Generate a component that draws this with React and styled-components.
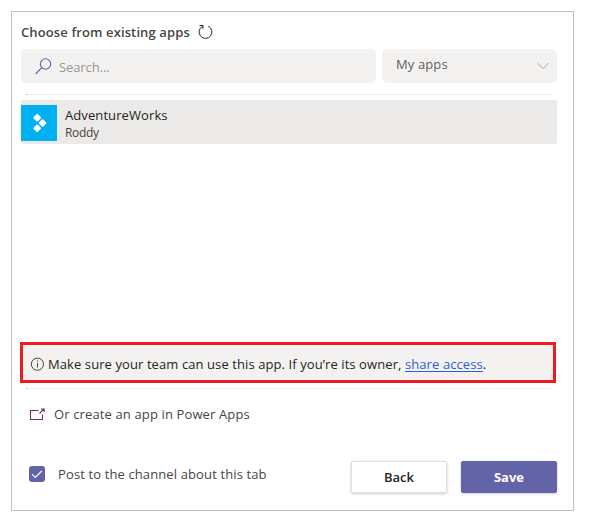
import React from "react";
import styled, { createGlobalStyle } from "styled-components";

const GlobalStyle = createGlobalStyle`
  * { box-sizing: border-box; }
  body {
    margin: 0;
    background: #fff;
    font-family: "Open Sans", "Noto Sans", sans-serif;
    font-size: 13px;
    color: #252423;
  }
`;

const Page = styled.main`
  padding: 11px;
  height: 524px;
`;

const Panel = styled.section`
  display: flex;
  flex-direction: column;
  width: 563px;
  height: 500px;
  padding: 9px 16px 0 9px;
  border: 1px solid #bfbfbf;
`;

const Label = styled.span`
  font-size: ${(p) => p.$size || 13}px;
  font-weight: ${(p) => p.$weight || 400};
  letter-spacing: ${(p) => p.$spacing || 0}px;
  color: ${(p) => p.$color || "#252423"};
  line-height: 18px;
  white-space: nowrap;
`;

const Header = styled.header`
  display: flex;
  height: 28px;
  padding-top: 2px;
  gap: 8px;

  svg { margin-top: 1px; }
`;

const Filters = styled.div`
  display: grid;
  grid-template-columns: 355px 175px;
  gap: 6px;
  height: 34px;
`;

const Field = styled.div`
  display: flex;
  align-items: center;
  border-radius: 5px;
  background: #f3f2f1;
`;

const SearchField = styled(Field)`
  padding: 2px 0 0 14px;
  gap: 7px;

  svg { margin-top: -2px; }
`;

const SelectField = styled(Field)`
  justify-content: space-between;
  padding: 0 7px 4px 14px;

  svg { margin-top: 3px; }
`;

const Divider = styled.hr`
  width: 526px;
  height: 1px;
  margin: ${(p) => p.$margin};
  border: 0;
  background: linear-gradient(to right, #b5b5b5 1px, #f0efee 1px);
  flex: none;
`;

const AppRow = styled.div`
  display: flex;
  align-items: flex-start;
  height: 44px;
  gap: 8px;
  padding-top: 5px;
  border-radius: 2px;
  background: #ebeae8;
`;

const AppIcon = styled.div`
  display: grid;
  place-items: center;
  width: 36px;
  height: 36px;
  background: #00b0f0;
`;

const AppText = styled.div`
  display: flex;
  flex-direction: column;
  padding-top: 1px;
`;

const Notice = styled.div`
  display: flex;
  align-items: center;
  width: 536px;
  height: 41px;
  margin: 198px 0 0 -1px;
  padding: 3px 0 0 7px;
  gap: 4px;
  border: 3px solid #ed1c24;
  background: #f3f2f1;
  flex: none;
`;

const ShareLink = styled.a`
  color: #2b5fd9;
  text-decoration: underline;
  text-underline-offset: 2px;
  text-decoration-thickness: 1px;
`;

const CreateRow = styled.div`
  display: flex;
  align-items: center;
  height: 20px;
  margin-top: 15px;
  padding-left: 8px;
  gap: 8px;
`;

const Footer = styled.footer`
  display: flex;
  align-items: flex-start;
  margin-top: 37px;
  height: 34px;
`;

const PostOption = styled.div`
  display: flex;
  align-items: center;
  width: 330px;
  height: 18px;
  padding-left: 8px;
  margin-top: 4px;
  gap: 13px;
`;

const CheckBox = styled.span`
  display: grid;
  place-items: center;
  width: 16px;
  height: 16px;
  border-radius: 3px;
  background: #6264a7;
`;

const Actions = styled.div`
  display: flex;
  gap: 14px;
`;

const Button = styled.button`
  width: 96px;
  height: 32px;
  padding: 0;
  border: 1px solid ${(p) => (p.$primary ? "#6264a7" : "#e1dfdd")};
  border-radius: 2px;
  background: ${(p) => (p.$primary ? "#6264a7" : "#fff")};
  color: ${(p) => (p.$primary ? "#fff" : "#252423")};
  box-shadow: 0 1px 3px rgba(0, 0, 0, 0.2);
  font: ${(p) => (p.$primary ? 700 : 600)} 13px "Open Sans", sans-serif;
`;

const RefreshIcon = () => (
  <svg width="15" height="16" viewBox="0 0 15 16" fill="none" stroke="#252423">
    <path d="M10.2 2.2A6.4 6.4 0 1 1 4.4 2.4" strokeWidth="1" />
    <path d="M1.6 1.5H4.9V4.8" strokeWidth="1.1" />
  </svg>
);

const SearchIcon = () => (
  <svg width="17" height="17" viewBox="0 0 17 17" fill="none" stroke="#6264a7">
    <circle cx="10.5" cy="6" r="5.2" strokeWidth="1.1" />
    <path d="M6.8 9.7L.6 16" strokeWidth="1.2" />
  </svg>
);

const ChevronIcon = () => (
  <svg width="14" height="8" viewBox="0 0 14 8" fill="none" stroke="#a6a5a4">
    <path d="M1.4 1L7 6.6L12.6 1" />
  </svg>
);

const DiamondsIcon = () => (
  <svg width="16" height="20" viewBox="0 0 16 20" fill="#fff" stroke="#fff" strokeWidth="2" strokeLinejoin="round">
    <path d="M6.2 1.9L9 4.7L6.2 7.5L3.4 4.7Z" />
    <path d="M11.6 7.2L14.4 10L11.6 12.8L8.8 10Z" />
    <path d="M6.2 12.5L9 15.3L6.2 18.1L3.4 15.3Z" />
  </svg>
);

const InfoIcon = () => (
  <svg width="14" height="14" viewBox="0 0 14 14" fill="none" stroke="#484644">
    <circle cx="7.4" cy="7.2" r="6.1" />
    <path d="M7.5 6V10.5M7.5 3.5V4.7" />
  </svg>
);

const ExternalIcon = () => (
  <svg width="17" height="13" viewBox="0 0 17 13" fill="none" stroke="#742774">
    <path d="M9.5 2.5H1.5V11.5H13.5V6.5" strokeWidth="1.1" />
    <path d="M10.5 5.5L15 1M12 1H15.2V4" strokeWidth="1.1" />
  </svg>
);

const CheckIcon = () => (
  <svg width="12" height="9" viewBox="0 0 12 9" fill="none" stroke="#fff">
    <path d="M1 4.2L4.3 7.5L10.8 1" strokeWidth="1.2" />
  </svg>
);

export default function App() {
  return (
    <>
      <GlobalStyle />
      <Page>
        <Panel>
          <Header>
            <Label $weight={600} $color="#484644" $spacing={0.12}>Choose from existing apps</Label>
            <RefreshIcon />
          </Header>
          <Filters>
            <SearchField>
              <SearchIcon />
              <Label $color="#979593" $spacing={-0.1}>Search...</Label>
            </SearchField>
            <SelectField>
              <Label $color="#605e5c" $spacing={0.12}>My apps</Label>
              <ChevronIcon />
            </SelectField>
          </Filters>
          <Divider $margin="11px 0 5px 5px" />
          <AppRow>
            <AppIcon><DiamondsIcon /></AppIcon>
            <AppText>
              <Label $spacing={0.09}>AdventureWorks</Label>
              <Label $size={12} $color="#484644" $spacing={-0.3}>Roddy</Label>
            </AppText>
          </AppRow>
          <Notice>
            <InfoIcon />
            <Label $spacing={0.088}>
              Make sure your team can use this app. If you’re its owner,{" "}
              <ShareLink>share access</ShareLink>.
            </Label>
          </Notice>
          <Divider $margin="5px 0 0 5px" />
          <CreateRow>
            <ExternalIcon />
            <Label $color="#484644" $spacing={0.13}>Or create an app in Power Apps</Label>
          </CreateRow>
          <Footer>
            <PostOption>
              <CheckBox><CheckIcon /></CheckBox>
              <Label $color="#484644" $spacing={0.12}>Post to the channel about this tab</Label>
            </PostOption>
            <Actions>
              <Button>Back</Button>
              <Button $primary>Save</Button>
            </Actions>
          </Footer>
        </Panel>
      </Page>
    </>
  );
}
